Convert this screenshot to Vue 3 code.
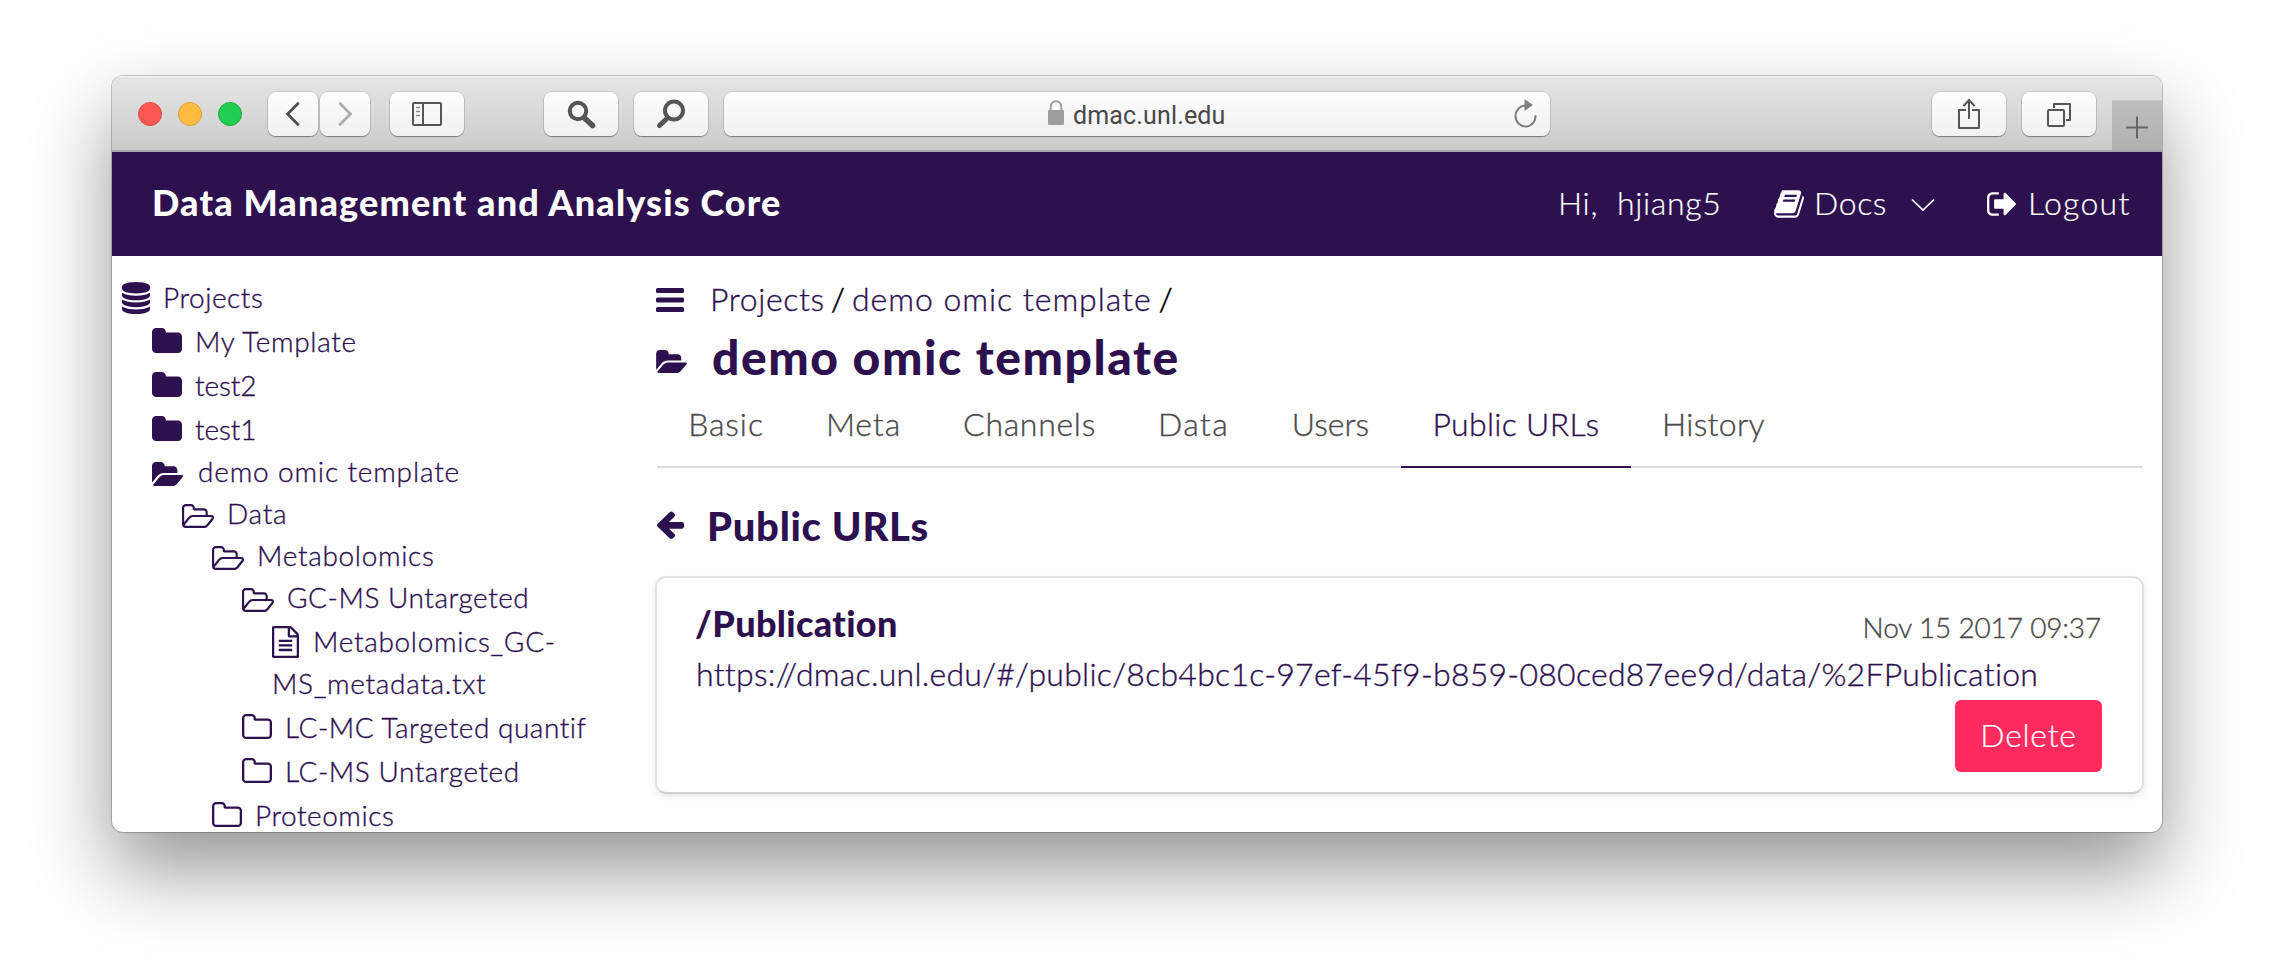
<script setup>
const icons = {
  database: { box: '128 0 1536 1792', d: 'M896 768q237 0 443-43t325-127v170q0 69-103 128t-280 93.5-385 34.5-385-34.5-280-93.5-103-128v-170q119 84 325 127t443 43zm0 768q237 0 443-43t325-127v170q0 69-103 128t-280 93.5-385 34.5-385-34.5-280-93.5-103-128v-170q119 84 325 127t443 43zm0-384q237 0 443-43t325-127v170q0 69-103 128t-280 93.5-385 34.5-385-34.5-280-93.5-103-128v-170q119 84 325 127t443 43zm0-1152q208 0 385 34.5t280 93.5 103 128v128q0 69-103 128t-280 93.5-385 34.5-385-34.5-280-93.5-103-128v-128q0-69 103-128t280-93.5 385-34.5z' },
  folder: { box: '64 128 1664 1408', d: 'M1728 608v704q0 92-66 158t-158 66h-1216q-92 0-158-66t-66-158v-960q0-92 66-158t158-66h320q92 0 158 66t66 158v32h672q92 0 158 66t66 158z' },
  open: { box: '0 128 1879 1408', d: 'M1879 952q0 31-31 66l-336 396q-43 51-120.500 86.500t-143.500 35.500h-1088q-34 0-60.500-13t-26.500-43q0-31 31-66l336-396q43-51 120.500-86.500t143.500-35.500h1088q34 0 60.500 13t26.500 43zm-343-344v160h-832q-94 0-197 47.500t-164 119.500l-337 396-5 6q0-4-.5-12.500t-.5-12.500v-960q0-92 66-158t158-66h320q92 0 158 66t66 158v32h544q92 0 158 66t66 158z' },
  folderO: { box: '64 128 1664 1408', d: 'M1600 1312v-704q0-40-28-68t-68-28h-704q-40 0-68-28t-28-68v-64q0-40-28-68t-68-28h-320q-40 0-68 28t-28 68v960q0 40 28 68t68 28h1216q40 0 68-28t28-68zm128-704v704q0 92-66 158t-158 66h-1216q-92 0-158-66t-66-158v-960q0-92 66-158t158-66h320q92 0 158 66t66 158v32h672q92 0 158 66t66 158z' },
  openO: { box: '0 0 1909 1408', d: 'M1781 803q0-35-53-35h-1088q-40 0-85.500 21.500t-71.500 52.500l-294 363q-18 24-18 40 0 35 53 35h1088q40 0 86-22t71-53l294-363q18-22 18-39zm-1141-163h768v-160q0-40-28-68t-68-28h-576q-40 0-68-28t-28-68v-64q0-40-28-68t-68-28h-320q-40 0-68 28t-28 68v853l256-315q44-53 116-87.500t140-34.500zm1269 163q0 62-46 120l-295 363q-43 53-116 87.500t-140 34.500h-1088q-92 0-158-66t-66-158v-960q0-92 66-158t158-66h320q92 0 158 66t66 158v32h544q92 0 158 66t66 158v160h192q54 0 99 24.500t67 70.500q15 32 15 68z' },
  file: { box: '128 0 1536 1792', d: 'M1596 380q28 28 48 76t20 88v1152q0 40-28 68t-68 28h-1344q-40 0-68-28t-28-68v-1600q0-40 28-68t68-28h896q40 0 88 20t76 48zm-444-244v376h376q-10-29-22-41l-313-313q-12-12-41-22zm384 1528v-1024h-416q-40 0-68-28t-28-68v-416h-768v1536h1280zm-1024-864q0-14 9-23t23-9h704q14 0 23 9t9 23v64q0 14-9 23t-23 9h-704q-14 0-23-9t-9-23v-64zm736 224q14 0 23 9t9 23v64q0 14-9 23t-23 9h-704q-14 0-23-9t-9-23v-64q0-14 9-23t23-9h704zm0 256q14 0 23 9t9 23v64q0 14-9 23t-23 9h-704q-14 0-23-9t-9-23v-64q0-14 9-23t23-9h704z' },
}

const tree = [
  { level: 0, icon: 'database', label: 'Projects', size: 'tall', fit: 'snug' },
  { level: 1, icon: 'folder', label: 'My Template', size: 'tall', fit: 'normal' },
  { level: 1, icon: 'folder', label: 'test2', size: 'tall', fit: 'tight' },
  { level: 1, icon: 'folder', label: 'test1', size: 'short', fit: 'tight' },
  { level: 1, icon: 'open', label: 'demo omic template', size: 'short', fit: 'wide' },
  { level: 2, icon: 'openO', label: 'Data', size: 'short', fit: 'normal' },
  { level: 3, icon: 'openO', label: 'Metabolomics', size: 'short', fit: 'normal' },
  { level: 4, icon: 'openO', label: 'GC-MS Untargeted', size: 'tall', fit: 'snug' },
  { level: 5, icon: 'file', label: 'Metabolomics_GC-MS_metadata.txt', size: 'double', fit: 'normal' },
  { level: 4, icon: 'folderO', label: 'LC-MC Targeted quantification', size: 'tall', fit: 'snug' },
  { level: 4, icon: 'folderO', label: 'LC-MS Untargeted', size: 'tall', fit: 'snug' },
  { level: 3, icon: 'folderO', label: 'Proteomics', size: 'tall', fit: 'snug' },
]

const tabs = [
  { label: 'Basic', cls: 'loose' },
  { label: 'Meta', cls: 'loose' },
  { label: 'Channels', cls: 'medium' },
  { label: 'Data', cls: 'looser' },
  { label: 'Users', cls: 'none' },
  { label: 'Public URLs', cls: 'slight active' },
  { label: 'History', cls: 'slight' },
]
</script>

<template>
  <div class="desktop">
    <div class="window">
      <div class="toolbar">
        <div class="lights"><i class="red"></i><i class="yellow"></i><i class="green"></i></div>
        <div class="btn arrow">
          <svg width="50" height="44" viewBox="0 0 50 44"><path d="M30 11.500 19.500 22 30 32.500" fill="none" stroke="#4d4d4d" stroke-width="2.700" stroke-linecap="round" /></svg>
        </div>
        <div class="btn arrow fwd">
          <svg width="50" height="44" viewBox="0 0 50 44"><path d="M20 11.500 30.500 22 20 32.500" fill="none" stroke="#adadad" stroke-width="2.700" stroke-linecap="round" /></svg>
        </div>
        <div class="btn panel">
          <svg width="74" height="44" viewBox="0 0 74 44"><g fill="none" stroke="#555"><rect x="23" y="11" width="28" height="22" rx="1" stroke-width="2" /><path d="M33 11v22" stroke-width="2" /><path d="M26 15.500h4M26 19.500h4M26 23.500h4" stroke-width="1.700" stroke="#888" /></g></svg>
        </div>
        <div class="btn find">
          <svg width="74" height="44" viewBox="0 0 74 44"><g fill="none" stroke="#555"><circle cx="34" cy="19" r="8.200" stroke-width="4" /><path d="M40.500 26 48.500 33.500" stroke-width="5.500" stroke-linecap="round" /></g></svg>
        </div>
        <div class="btn find2">
          <svg width="74" height="44" viewBox="0 0 74 44"><g fill="none" stroke="#555"><circle cx="40" cy="18.500" r="9" stroke-width="4" /><path d="M33.500 26 25.500 33.500" stroke-width="5" stroke-linecap="round" /></g></svg>
        </div>
        <div class="btn address">
          <svg class="lock" width="16" height="25" viewBox="0 0 16 25"><path d="M2.800 11V6.500a5.200 5.200 0 0 1 10.400 0V11" fill="none" stroke="#a0a0a0" stroke-width="2" /><rect y="10" width="16" height="15" rx="1" fill="#9d9d9d" /></svg>
          <span class="host">dmac.unl.edu</span>
          <svg class="reload" width="26" height="30" viewBox="0 0 26 30"><path d="M12.500 6.500A10 10.500 0 1 0 22.500 16" fill="none" stroke="#808080" stroke-width="2" /><path d="M11.500 0 20 6 11.500 12z" fill="#808080" /></svg>
        </div>
        <div class="btn share">
          <svg width="74" height="44" viewBox="0 0 74 44"><g fill="none" stroke="#555" stroke-width="2"><path d="M34 18h-7v18h20V18h-7" stroke-linejoin="round" /><path d="M37 27V8.500M31.500 14 37 8l5.500 6" /></g></svg>
        </div>
        <div class="btn overview">
          <svg width="74" height="44" viewBox="0 0 74 44"><g fill="none" stroke="#555" stroke-width="2" stroke-linejoin="round"><rect x="26" y="18" width="16" height="16" rx="1" /><path d="M32 16v-4h16v16h-4" /></g></svg>
        </div>
        <div class="newtab">
          <svg width="50" height="49" viewBox="0 0 50 49"><path d="M25 15.500v22M14 26.500h22" stroke="#666" stroke-width="2" /></svg>
        </div>
      </div>

      <header class="nav">
        <span class="brand">Data Management and Analysis Core</span>
        <span class="user">Hi,&nbsp; hjiang5</span>
        <a class="docs">
          <svg class="book" viewBox="66 128 1664 1536"><path fill="currentColor" d="M1703 478q40 57 18 129l-275 906q-19 64-76.500 107.500t-122.500 43.500h-923q-77 0-148.500-53.500t-99.500-131.500q-24-67-2-127 0-4 3-27t4-37q1-8-3-21.500t-3-19.500q2-11 8-21t16.500-23.500 16.500-23.500q23-38 45-91.500t30-91.500q3-10 .5-30t-.5-28q3-11 17-28t17-23q21-36 42-92t25-90q1-9-2.500-32t.5-28q4-13 22-30.500t22-22.500q19-26 42.500-84.500t27.500-96.500q1-8-3-25.500t-2-26.500q2-8 9-18t18-23 17-21q8-12 16.500-30.500t15-35 16-36 19.500-32 26.500-23.500 36-11.500 47.500 5.500l-1 3q38-9 51-9h761q74 0 114 56t18 130l-274 906q-36 119-71.500 153.500t-128.500 34.500h-869q-27 0-38 15-11 16-1 43 24 70 144 70h923q29 0 56-15.500t35-41.500l300-987q7-22 5-57 38 15 59 43zm-1064 2q-4 13 2 22.500t20 9.500h608q13 0 25.500-9.500t16.500-22.500l21-64q4-13-2-22.500t-20-9.500h-608q-13 0-25.500 9.500t-16.500 22.500zm-83 256q-4 13 2 22.500t20 9.500h608q13 0 25.500-9.500t16.500-22.500l21-64q4-13-2-22.500t-20-9.500h-608q-13 0-25.500 9.500t-16.500 22.500z" /></svg>
          <span>Docs</span>
          <svg class="chevron" viewBox="0 0 24 14"><path d="M1 1.500 12 12 23 1.500" fill="none" stroke="#fff" stroke-width="1.700" /></svg>
        </a>
        <a class="logout">
          <svg viewBox="64 256 1568 1280"><path fill="currentColor" d="M704 1440q0 4 1 20t.5 26.500-3 23.500-10 19.500-20.500 6.500h-320q-119 0-203.500-84.500t-84.500-203.500v-704q0-119 84.500-203.500t203.500-84.500h320q13 0 22.500 9.500t9.500 22.500q0 4 1 20t.5 26.500-3 23.500-10 19.500-20.500 6.500h-320q-66 0-113 47t-47 113v704q0 66 47 113t113 47h312l11.500 1 11.500 3 8 5.500 7 9 2 13.500zm928-544q0 26-19 45l-544 544q-19 19-45 19t-45-19-19-45v-288h-448q-26 0-45-19t-19-45v-384q0-26 19-45t45-19h448v-288q0-26 19-45t45-19 45 19l544 544q19 19 19 45z" /></svg>
          <span>Logout</span>
        </a>
      </header>

      <div class="page">
        <nav class="tree">
          <div v-for="(n, i) in tree" :key="i" :class="['node', 'lv' + n.level, n.size, n.fit]">
            <svg :class="['ico', n.icon]" :viewBox="icons[n.icon].box" preserveAspectRatio="none"><path :d="icons[n.icon].d" fill="currentColor" /></svg><span>{{ n.label }}</span>
          </div>
        </nav>

        <main>
          <div class="crumbs">
            <svg width="28" height="24" viewBox="0 0 28 24"><g fill="currentColor"><rect width="28" height="5" rx="1.500" /><rect y="9.500" width="28" height="5" rx="1.500" /><rect y="19" width="28" height="5" rx="1.500" /></g></svg>
            <a class="first">Projects</a><b>/</b><a class="second">demo omic template</a><b>/</b>
          </div>
          <h1>
            <svg :viewBox="icons.open.box"><path :d="icons.open.d" fill="currentColor" /></svg>
            <span>demo omic template</span>
          </h1>
          <div class="tabs">
            <a v-for="t in tabs" :key="t.label" :class="t.cls">{{ t.label }}</a>
          </div>
          <h2>
            <svg width="27" height="28" viewBox="192 150 1472 1590" preserveAspectRatio="none"><path fill="currentColor" d="M1664 896v128q0 53-32.500 90.500t-84.500 37.500h-704l293 294q38 36 38 90t-38 90l-75 76q-37 37-90 37-52 0-91-37l-651-652q-37-37-37-90 0-52 37-91l651-650q38-38 91-38 52 0 90 38l75 74q38 38 38 91t-38 91l-293 293h704q52 0 84.500 37.500t32.500 90.500z" /></svg>
            <span>Public URLs</span>
          </h2>
          <section class="card">
            <div class="head"><strong>/Publication</strong><time>Nov 15 2017 09:37</time></div>
            <a class="url">https://dmac.unl.edu/#/public/8cb4bc1c-97ef-45f9-b859-080ced87ee9d/data/%2FPublication</a>
            <button>Delete</button>
          </section>
        </main>
      </div>
    </div>
  </div>
</template>

<style>
html, body { margin: 0; background: #fff; overflow: hidden; }
</style>

<style scoped>
* { box-sizing: border-box; }
svg { display: block; flex: none; }
.desktop {
  height: 980px; padding: 76px 112px 148px; background: #fff; overflow: hidden;
  font-family: Lato, "Open Sans", sans-serif; font-weight: 300; font-size: 32px; color: #2d114f;
  font-variant-ligatures: none; -webkit-text-stroke: .35px currentColor;
}
.window {
  height: 756px; display: flex; flex-direction: column; overflow: hidden;
  border-radius: 11px; background: #fefefe;
  box-shadow: 0 0 0 1px rgba(0, 0, 0, .22), 0 38px 80px rgba(0, 0, 0, .42);
}
.toolbar {
  height: 76px; flex: none; display: flex; padding: 16px 0 0 26px;
  background: linear-gradient(#e6e6e6, #cbcbcb);
  border-bottom: 2px solid #a8a6aa; box-shadow: inset 0 1px #f6f6f6;
}
.lights { display: flex; gap: 16px; width: 130px; padding-top: 10px; }
.lights i { width: 24px; height: 24px; border-radius: 50%; }
.red { background: #fd5754; border: 1px solid #e2443f; }
.yellow { background: #febc41; border: 1px solid #e0a02f; }
.green { background: #20ce52; border: 1px solid #14ab38; }
.btn {
  height: 44px; width: 74px; border-radius: 8px; flex: none;
  background: linear-gradient(#fdfdfd, #f1f1f1);
  box-shadow: 0 0 0 1px rgba(0, 0, 0, .1), 0 1px 1px rgba(0, 0, 0, .35);
}
.arrow { width: 50px; }
.fwd { margin-left: 2px; }
.panel { margin-left: 20px; }
.find { margin-left: 80px; }
.find2 { margin-left: 16px; }
.address {
  width: 826px; margin-left: 16px; display: flex; align-items: center;
  font: 400 25px Roboto, "Liberation Sans", sans-serif; color: #484848; -webkit-text-stroke: 0;
}
.lock { margin: 0 9px 3px 324px; }
.host { width: 440px; letter-spacing: .15px; padding-top: 2px; }
.reload { margin-bottom: 1px; }
.share { margin-left: 382px; }
.overview { margin-left: 16px; }
.newtab { width: 50px; height: 49px; margin: 9px 0 0 16px; background: linear-gradient(#bebebe, #b0b0b0); box-shadow: 0 -1px #c6c6c6; }

.nav { height: 104px; flex: none; display: flex; align-items: center; padding-left: 40px; background: #2d114f; color: #fff; white-space: nowrap; -webkit-text-stroke: .2px currentColor; }
.nav span { padding-bottom: 4px; }
.nav a { display: flex; align-items: center; }
.nav .brand { width: 1406px; font-size: 36px; font-weight: 900; letter-spacing: 1.14px; padding-bottom: 5px; -webkit-text-stroke: 0; }
.user { width: 216px; letter-spacing: .7px; }
.book { width: 30px; height: 28px; margin-right: 10px; }
.docs { width: 213px; }
.docs span { width: 97px; letter-spacing: .6px; }
.chevron { width: 24px; height: 14px; margin-top: 2px; }
.logout svg { width: 29px; height: 24px; margin-right: 12px; }
.logout span { letter-spacing: 1.3px; }

.page { flex: 1; min-height: 0; display: flex; }
.tree { width: 476px; flex: none; padding: 20px 0 0 10px; overflow: hidden; font-size: 28px; line-height: 42px; }
.node { display: flex; white-space: nowrap; }
.tall { height: 44px; }
.short { height: 42px; }
.lv1 { padding-left: 30px; }
.lv2 { padding-left: 60px; }
.lv3 { padding-left: 90px; }
.lv4 { padding-left: 120px; }
.lv5 { padding-left: 150px; }
.snug { letter-spacing: .53px; }
.normal { letter-spacing: .68px; }
.tight { letter-spacing: -.1px; }
.wide { letter-spacing: .84px; }
.ico { width: 30px; height: 25px; margin: 8px 13px 0 0; }
.ico.database { width: 28px; height: 32px; margin-top: 6px; }
.ico.open { width: 31px; height: 24px; margin: 12px 15px 0 0; }
.ico.openO { width: 32px; height: 24px; margin: 12px 13px 0 0; }
.double { display: block; height: 86px; width: 450px; white-space: normal; }
.double .ico { display: inline-block; width: 27px; height: 32px; margin: 0 14px 0 0; vertical-align: -6px; }

main { flex: 1; margin-left: 68px; padding: 18px 20px 0 0; white-space: nowrap; }
.crumbs { height: 48px; display: flex; align-items: center; }
.crumbs svg { margin: 4px 26px 0 0; }
.crumbs b { font-weight: 300; color: #000; width: 28px; text-align: center; -webkit-text-stroke: .6px currentColor; }
.first { letter-spacing: .6px; width: 114px; }
.second { letter-spacing: .97px; }
h1, h2 { margin: 0; display: flex; align-items: center; font-weight: 900; -webkit-text-stroke: 0; }
h1 { height: 50px; margin-top: 8px; font-size: 48px; letter-spacing: 1.57px; }
h1 span { padding-top: 2px; }
h1 svg { width: 31px; height: 23px; margin: 13px 25px 0 0; }
.tabs {
  height: 88px; display: grid; grid-template-columns: 138px 137px 195px 133px 141px 230px 165px;
  line-height: 88px; text-align: center; color: #4a4a4a; margin-left: 1px; padding-right: 1px; box-shadow: inset 0 -2px #dbdbdb;
}
.tabs a { height: 88px; }
.loose { letter-spacing: .9px; }
.looser { letter-spacing: 1.4px; }
.medium { letter-spacing: .7px; }
.slight { letter-spacing: .3px; }
.active { color: #2d114f; box-shadow: inset 0 -2px #2d114f; }
h2 { height: 57px; margin-top: 28px; font-size: 40px; letter-spacing: .7px; }
h2 span { padding-top: 2px; }
h2 svg { margin: 1px 23px 0 1px; }
.card {
  height: 218px; margin: 23px -2px 0 -1px; padding: 20px 40px 20px 38px; border: 2px solid #e2e2e2; border-bottom-color: #d0d0d0;
  border-radius: 11px; display: flex; flex-direction: column; box-shadow: 0 3px 6px rgba(0, 0, 0, .08);
}
.head { height: 48px; display: flex; justify-content: space-between; align-items: center; }
strong { font-size: 36px; font-weight: 900; letter-spacing: .33px; padding-top: 1px; -webkit-text-stroke: 0; }
time { font-size: 28px; color: #4a4a4a; letter-spacing: -.17px; padding: 10px 1px 0 0; }
.url { line-height: 56px; height: 54px; margin-left: 1px; letter-spacing: .26px; }
button {
  align-self: flex-end; width: 147px; height: 72px; border: 0; border-radius: 6px; background: #ff2b5f; color: #fff;
  font: inherit; letter-spacing: .7px; padding: 0 0 4px; -webkit-text-stroke: .2px currentColor;
}
</style>
